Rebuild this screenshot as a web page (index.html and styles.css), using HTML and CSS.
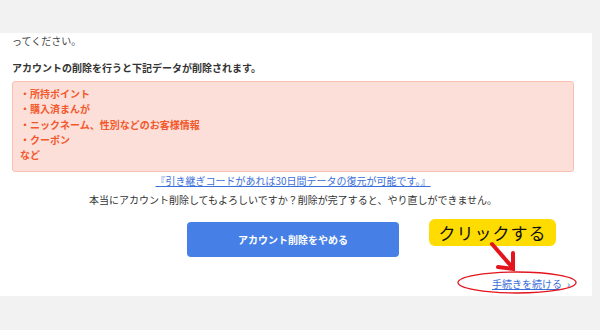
FILE: index.html
```html
<!DOCTYPE html>
<html lang="ja">
<head>
  <meta charset="UTF-8" />
  <title>アカウント削除</title>
  <link rel="stylesheet" href="styles.css">
</head>
<body>
  <div class="panel">
    <p class="lead">ってください。</p>
    <h3 class="warn-title">アカウントの削除を行うと下記データが削除されます。</h3>
    <div class="warn-box">
      <div>・所持ポイント</div>
      <div>・購入済まんが</div>
      <div>・ニックネーム、性別などのお客様情報</div>
      <div>・クーポン</div>
      <div>など</div>
    </div>
    <div class="center">
      <a class="restore-link" href="#">『引き継ぎコードがあれば30日間データの復元が可能です。』</a>
      <p class="confirm">本当にアカウント削除してもよろしいですか？削除が完了すると、やり直しができません。</p>
      <button class="cancel-btn">アカウント削除をやめる</button>
    </div>
    <div class="continue">
      <a href="#">手続きを続ける</a><span class="chev">›</span>
    </div>

    <!-- annotation overlay -->
    <div class="note">クリックする</div>
    <svg class="marks" width="592" height="263" viewBox="0 0 592 263">
      <g stroke="#e3141c" stroke-width="4" stroke-linecap="round" fill="none">
        <line x1="492" y1="211" x2="512" y2="234" />
        <polyline points="513,220 513,236 498,234" />
      </g>
      <ellipse cx="517" cy="249.5" rx="59" ry="10.5" fill="none" stroke="#e3141c" stroke-width="1.3" />
    </svg>
  </div>
</body>
</html>
```

FILE: styles.css
```css
body {
  margin: 0;
  background: #f2f2f2;
  font-family: "Noto Sans CJK JP", "Liberation Sans", sans-serif;
  font-size: 10px;
  line-height: 15px;
  color: #333;
}
.panel {
  position: relative;
  width: 592px;
  height: 263px;
  margin-top: 33px;
  background: #fff;
  padding: 0 18px 0 12px;
  box-sizing: border-box;
}
.lead {
  margin: 0;
  color: #444;
}
.warn-title {
  margin: 12px 0 6px;
  font-size: 10px;
  font-weight: bold;
}
.warn-box {
  background: #fcdfd9;
  border: 1px solid #f8c0b1;
  border-radius: 3px;
  padding: 4px 7px 9px;
  color: #f2582b;
  font-weight: bold;
  line-height: 15.3px;
}
.center {
  text-align: center;
  padding-top: 1px;
}
.restore-link {
  display: block;
  color: #3b6fd9;
  text-decoration: underline;
}
.confirm {
  margin: 4px 0 0;
}
.cancel-btn {
  display: block;
  margin: 15px auto 0;
  width: 212px;
  height: 35px;
  border: none;
  border-radius: 4px;
  background: #4680e6;
  color: #fff;
  font-family: inherit;
  font-size: 10px;
  font-weight: bold;
}
.continue {
  text-align: right;
  margin-top: 19px;
  padding-right: 4px;
}
.continue a {
  color: #3b6fd9;
  text-decoration: underline;
}
.chev {
  color: #3b6fd9;
  margin-left: 5px;
}
.note {
  position: absolute;
  left: 429px;
  top: 186px;
  width: 127px;
  height: 27px;
  background: #ffdc00;
  border-radius: 6px;
  color: #111;
  font-size: 17px;
  line-height: 27px;
  text-align: center;
  letter-spacing: 1px;
}
.marks {
  position: absolute;
  left: 0;
  top: 0;
  pointer-events: none;
}
```
